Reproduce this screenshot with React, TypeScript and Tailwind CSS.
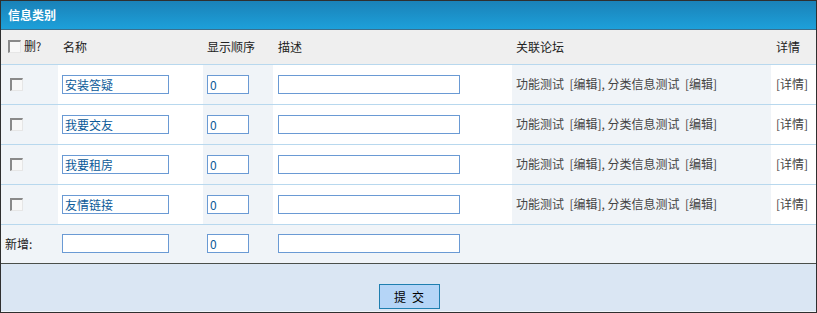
const rows = ["安装答疑", "我要交友", "我要租房", "友情链接"];

function Box() {
  return (
    <span className="inline-block w-[13px] h-[13px] border-t-[2px] border-l-[2px] border-t-[#8a8a8a] border-l-[#8a8a8a] border-r border-b border-r-[#e6e6e6] border-b-[#e6e6e6] bg-[#f8f8f8] align-middle" />
  );
}

function Field({ w, value }: { w: string; value?: string }) {
  return (
    <input
      readOnly
      value={value ?? ""}
      className={`${w} h-[19px] border border-[#6a9ad4] bg-white px-[2px] text-[12px] text-[#0b5a98] outline-none align-middle`}
    />
  );
}

export default function App() {
  const font = { fontFamily: '"Noto Sans CJK SC", "Liberation Sans", sans-serif' };
  return (
    <div
      className="w-[817px] h-[313px] border border-[#2f2f2f] bg-[#f0f4f8] text-[12px] leading-none text-[#222] overflow-hidden"
      style={font}
    >
      {/* Title bar */}
      <div className="h-[28px] flex items-center pl-[7px] bg-gradient-to-b from-[#1a82b8] to-[#1da0da] text-white font-bold text-[12px]">
        信息类别
      </div>
      <div className="h-px bg-[#3a6f8e]" />

      <table className="w-[815px] border-collapse table-fixed">
        <colgroup>
          <col className="w-[57px]" />
          <col className="w-[145px]" />
          <col className="w-[70px]" />
          <col className="w-[239px]" />
          <col className="w-[259px]" />
          <col className="w-[45px]" />
        </colgroup>
        <thead>
          <tr className="h-[34px] bg-[#efefef] border-b border-[#b8d8ee] text-[#222]">
            <th className="font-normal text-left pl-[7px]">
              <span className="inline-flex items-center gap-[3px]">
                <Box />
                <span>删<span className="text-[11px]">?</span></span>
              </span>
            </th>
            <th className="font-normal text-left pl-[5px]">名称</th>
            <th className="font-normal text-left pl-[4px]">显示顺序</th>
            <th className="font-normal text-left pl-[5px]">描述</th>
            <th className="font-normal text-left pl-[4px]">关联论坛</th>
            <th className="font-normal text-left pl-[5px]">详情</th>
          </tr>
        </thead>
        <tbody>
          {rows.map((name) => (
            <tr key={name} className="h-[40px] border-b border-[#b8d8ee]">
              <td className="bg-[#f0f4f8] pl-[9px]">
                <Box />
              </td>
              <td className="bg-white pl-[4px]">
                <Field w="w-[107px]" value={name} />
              </td>
              <td className="bg-[#f0f4f8] pl-[4px]">
                <Field w="w-[42px]" value="0" />
              </td>
              <td className="bg-white pl-[5px]">
                <Field w="w-[182px]" />
              </td>
              <td className="bg-[#f0f4f8] pl-[4px] text-[#444] whitespace-nowrap">
                功能测试&nbsp; [编辑], 分类信息测试&nbsp; [编辑]
              </td>
              <td className="bg-white pl-[5px] text-[#444]">[详情]</td>
            </tr>
          ))}
          <tr className="h-[39px] bg-[#f0f4f8]">
            <td className="pl-[4px]">新增:</td>
            <td className="pl-[4px]">
              <Field w="w-[107px]" />
            </td>
            <td className="pl-[4px]">
              <Field w="w-[42px]" value="0" />
            </td>
            <td className="pl-[5px]">
              <Field w="w-[182px]" />
            </td>
            <td />
            <td />
          </tr>
        </tbody>
      </table>

      {/* Footer */}
      <div className="h-px bg-[#4a4f4a]" />
      <div className="h-[47px] bg-[#dae6f3] flex justify-center pt-[20px] pl-[1px]">
        <button className="w-[61px] h-[25px] border border-[#1f7fb0] bg-[#b5d5f7] text-[12px] text-black tracking-[6px] pl-[6px]">
          提交
        </button>
      </div>
    </div>
  );
}
